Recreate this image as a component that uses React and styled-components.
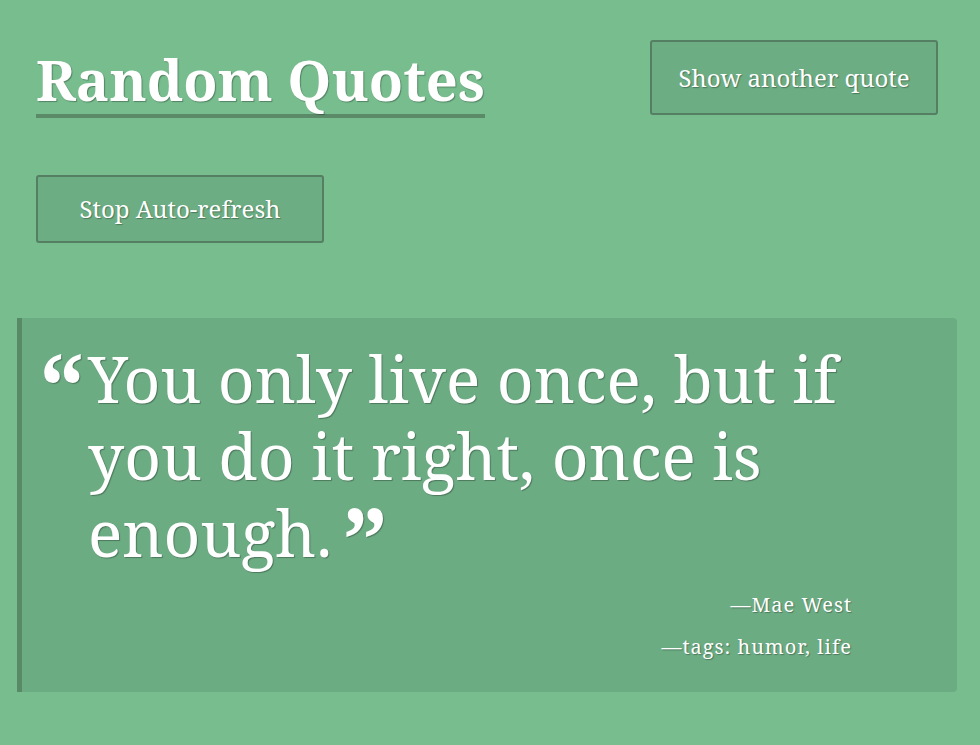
import React from "react";
import styled, { createGlobalStyle } from "styled-components";

const GlobalStyle = createGlobalStyle`
  html, body {
    margin: 0;
    padding: 0;
    background: #77bd8e;
  }
  body {
    font-family: "Noto Serif", "DejaVu Serif", serif;
    color: #fff;
  }
`;

const quote = {
  text: "You only live once, but if you do it right, once is enough.",
  author: "Mae West",
  tags: ["humor", "life"],
};

const App = () => {
  return (
    <>
      <GlobalStyle />
      <StPage>
        <StHeader>
          <StTitle>Random Quotes</StTitle>
          <StButton $h="75px">Show another quote</StButton>
        </StHeader>
        <StRefresh $h="68px">Stop Auto-refresh</StRefresh>
        <StQuote>
          <StText>
            <StOpen>“</StOpen>
            {quote.text}
            <StClose>”</StClose>
          </StText>
          <StMeta>—{quote.author}</StMeta>
          <StMeta>—tags: {quote.tags.join(", ")}</StMeta>
        </StQuote>
      </StPage>
    </>
  );
};

export default App;

const StPage = styled.div`
  width: 980px;
  height: 745px;
  padding: 40px 42px 0 17px;
  box-sizing: border-box;
  display: flex;
  flex-direction: column;
  align-items: flex-start;
  text-shadow: 1px 1px 1px rgba(0, 0, 0, 0.3);
`;

const StHeader = styled.div`
  width: 921px;
  padding-left: 19px;
  box-sizing: border-box;
  display: flex;
  justify-content: space-between;
  align-items: flex-start;
`;

const StTitle = styled.h1`
  margin: 8px 0 0;
  font-size: 56px;
  font-weight: 700;
  line-height: 62px;
  border-bottom: 4px solid #5a8a68;
  padding-bottom: 4px;
`;

const StButton = styled.button`
  width: 288px;
  height: ${(p) => p.$h};
  background: #6cad83;
  border: 2px solid #557f62;
  border-radius: 3px;
  color: #fff;
  font-family: inherit;
  font-size: 24px;
  text-shadow: 1px 1px 1px rgba(0, 0, 0, 0.3);
  padding: 0;
`;

const StRefresh = styled(StButton)`
  margin: 57px 0 0 19px;
  padding-bottom: 2px;
`;

const StQuote = styled.div`
  margin-top: 75px;
  width: 940px;
  box-sizing: border-box;
  background: #6cac83;
  border-left: 5px solid #598a67;
  border-radius: 0 4px 4px 0;
  padding: 22px 105px 24px 66px;
`;

const StText = styled.p`
  margin: 0 0 13px;
  font-size: 64px;
  line-height: 77px;
`;

const QuoteMark = styled.span`
  font-weight: 700;
  font-size: 94px;
  line-height: 0;
  vertical-align: -19px;
`;

const StOpen = styled(QuoteMark)`
  display: inline-block;
  width: 46px;
  margin-left: -46px;
  text-indent: -3px;
`;

const StClose = styled(QuoteMark)`
  margin-left: 10px;
`;

const StMeta = styled.div`
  text-align: right;
  font-size: 20px;
  letter-spacing: 1px;
  line-height: 42px;
`;
